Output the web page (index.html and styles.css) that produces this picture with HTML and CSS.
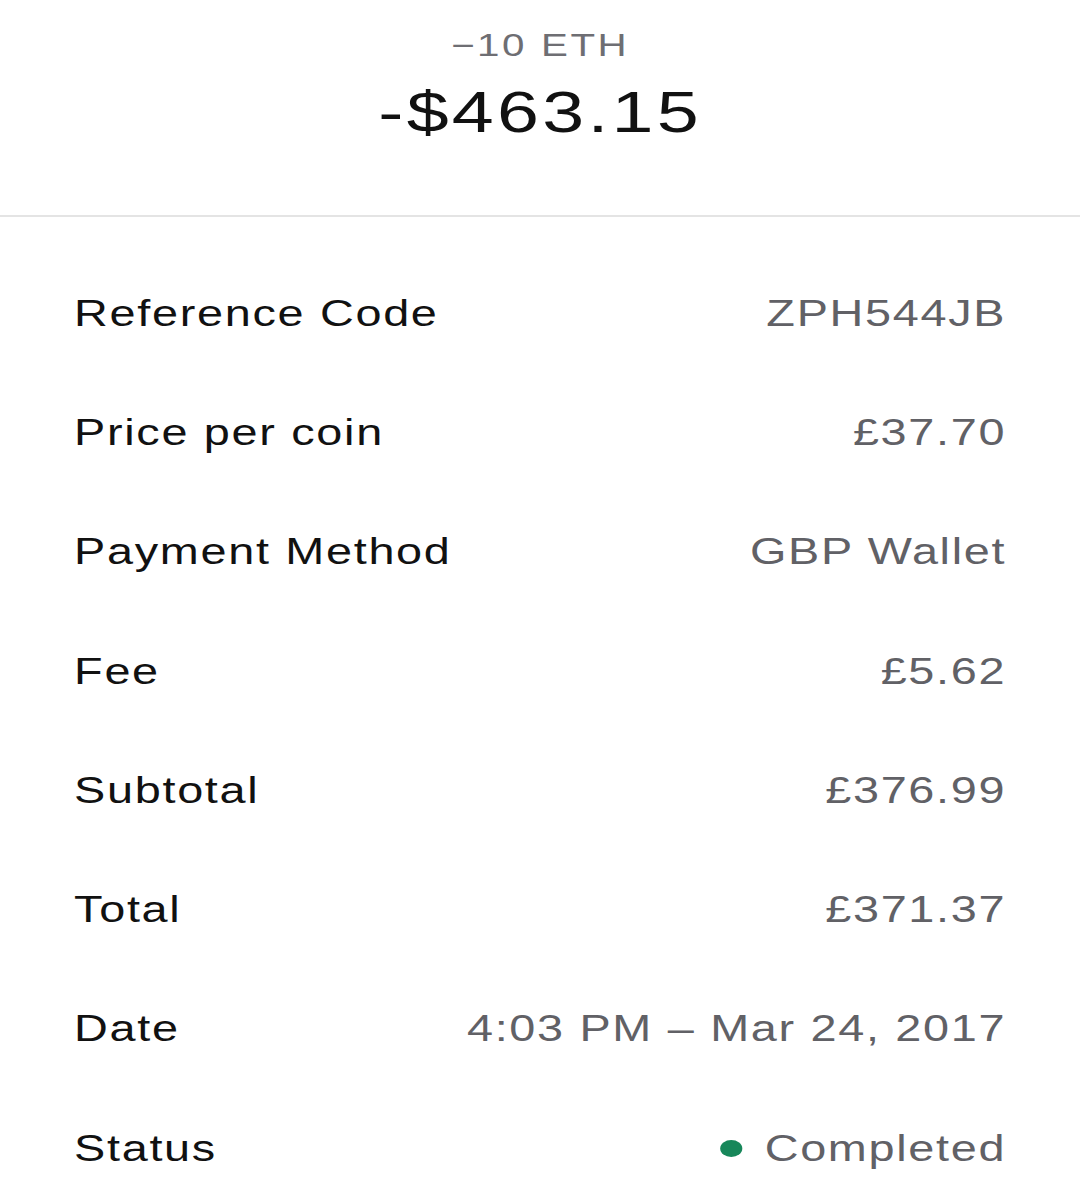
FILE: index.html
```html
<!DOCTYPE html>
<html lang="en">
<head>
    <meta charset="UTF-8">
    <meta name="viewport" content="width=device-width, initial-scale=1.0">
    <title>Transaction Details</title>
    <link rel="stylesheet" href="styles.css">
</head>
<body>
    <div class="screen">
        <div class="summary">
            <div class="coin-amount">&minus;10 ETH</div>
            <div class="fiat-amount">-$463.15</div>
        </div>
        <div class="details">
            <div class="row">
                <span class="label">Reference Code</span>
                <span class="value">ZPH544JB</span>
            </div>
            <div class="row">
                <span class="label">Price per coin</span>
                <span class="value">£37.70</span>
            </div>
            <div class="row">
                <span class="label">Payment Method</span>
                <span class="value">GBP Wallet</span>
            </div>
            <div class="row">
                <span class="label">Fee</span>
                <span class="value">£5.62</span>
            </div>
            <div class="row">
                <span class="label">Subtotal</span>
                <span class="value">£376.99</span>
            </div>
            <div class="row">
                <span class="label">Total</span>
                <span class="value">£371.37</span>
            </div>
            <div class="row">
                <span class="label">Date</span>
                <span class="value">4:03 PM – Mar 24, 2017</span>
            </div>
            <div class="row">
                <span class="label">Status</span>
                <span class="value status"><span class="dot"></span>Completed</span>
            </div>
        </div>
    </div>
</body>
</html>
```

FILE: styles.css
```css
body {
    margin: 0;
    background: #fff;
    font-family: 'Liberation Sans', Arial, sans-serif;
    overflow: hidden;
}

.screen {
    width: 831px;
    transform: scaleX(1.3);
    transform-origin: 0 0;
}

.summary {
    padding: 27px 0 69px;
    text-align: center;
    border-bottom: 2px solid #e4e4e4;
}

.coin-amount {
    font-size: 31px;
    line-height: 38px;
    color: #6e6e73;
    letter-spacing: 2px;
}

.fiat-amount {
    margin-top: 13px;
    font-size: 58px;
    line-height: 68px;
    color: #111;
    letter-spacing: 2.5px;
}

.details {
    padding: 37px 57px 0;
}

.row {
    display: flex;
    justify-content: space-between;
    align-items: center;
    height: 119.3px;
    font-size: 36px;
}

.label {
    color: #111;
    letter-spacing: 1.3px;
}

.value {
    color: #616166;
    letter-spacing: 1.3px;
}

.status {
    display: flex;
    align-items: center;
}

.dot {
    width: 17px;
    height: 17px;
    margin-right: 17px;
    border-radius: 50%;
    background: #17875a;
}
```
